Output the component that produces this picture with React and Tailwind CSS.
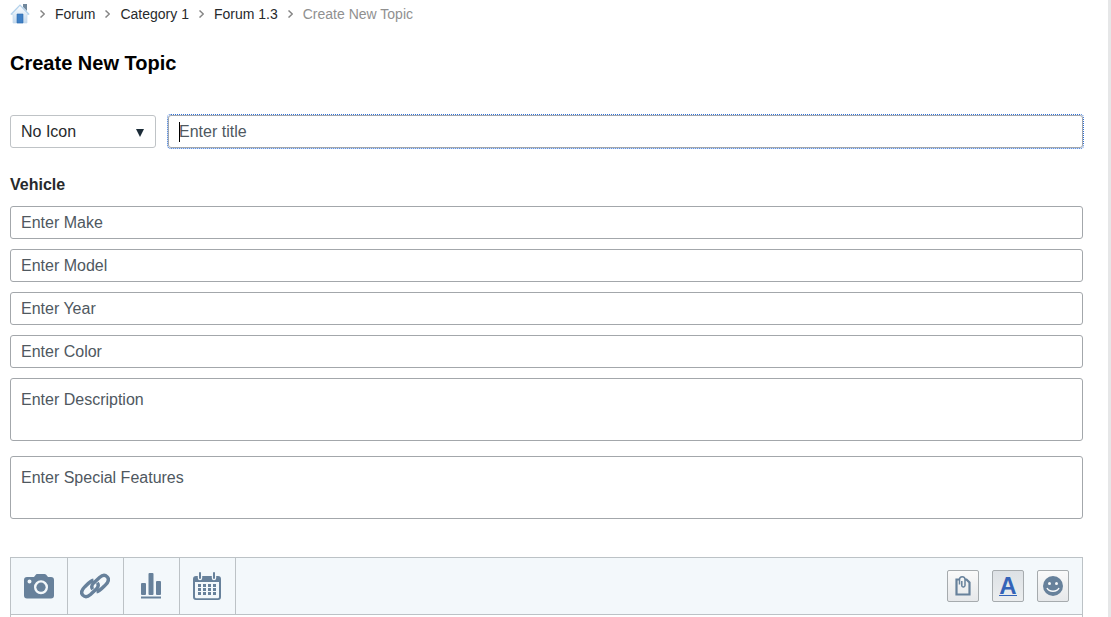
import React from "react";

const field =
  "block w-full rounded-[3px] border border-[#a3a7ab] bg-white px-[10px] text-base text-[#272a34] placeholder:text-[#4f585f] placeholder:opacity-100";

function HomeIcon() {
  return (
    <svg width="20" height="20" viewBox="0 0 20 20" aria-hidden="true">
      <defs>
        <linearGradient id="wall" x1="0" y1="0" x2="0" y2="1">
          <stop offset="0" stopColor="#ffffff" />
          <stop offset="1" stopColor="#c3d9ee" />
        </linearGradient>
      </defs>
      <path d="M13 0h4v7l-4-4z" fill="#71889d" />
      <path d="M10 1L18.500 10.500H17V19H3v-8.500H1.500z" fill="url(#wall)" stroke="#c6daec" strokeWidth=".7" />
      <path d="M.8 10.500L10 1l9.200 9.500" fill="none" stroke="#b4d2ec" strokeWidth="1.200" />
      <path d="M7 10h6v9H7z" fill="#3f80c6" stroke="#2e68ab" strokeWidth=".6" />
    </svg>
  );
}

function Chevron() {
  return (
    <svg width="5" height="8" viewBox="0 0 5 8" aria-hidden="true">
      <path d="M.5 .5l3.800 3.500L.5 7.500" fill="none" stroke="#858585" strokeWidth="1.500" />
    </svg>
  );
}

function CameraIcon() {
  return (
    <svg width="30" height="26" viewBox="0 0 30 26" aria-hidden="true">
      <path
        fillRule="evenodd"
        fill="#67819b"
        d="M3 4h7l2-2.400C12.400 1.100 13 1 13.500 1h7c.6 0 1.100.2 1.500.6L24 4h3a3 3 0 0 1 3 3V22.500a3 3 0 0 1-3 3H3a3 3 0 0 1-3-3V7a3 3 0 0 1 3-3zM17 7.200a7 7 0 1 0 0 14 7 7 0 0 0 0-14zM5.500 6.500a2 2 0 1 0 0 4 2 2 0 0 0 0-4z"
      />
      <circle cx="17" cy="14.200" r="4.600" fill="#67819b" />
    </svg>
  );
}

function LinkIcon() {
  const half =
    "M13.500 7.200c-3 .5-5.500 3.400-8.800 6.700-3.300 3.200-3.800 6.200-1.900 8.300 2.100 2.200 5.100 1.700 7.700-.6l5.800-5.500c2.200-2.200 2.400-4.500 1-6.300";
  return (
    <svg width="30" height="26" viewBox="0 0 30 26" aria-hidden="true">
      <g fill="none" stroke="#67819b" strokeWidth="3.400">
        <path d={half} />
        <path d={half} transform="rotate(180 15 13)" />
      </g>
    </svg>
  );
}

function ChartIcon() {
  return (
    <svg width="22" height="26" viewBox="0 0 22 26" aria-hidden="true" fill="#67819b">
      <rect x="1" y="10" width="5" height="12" rx="1" />
      <rect x="8.500" y="0" width="5" height="22" rx="1" />
      <rect x="16" y="8" width="5" height="14" rx="1" />
      <rect x="1" y="23.500" width="20" height="2" />
    </svg>
  );
}

function CalendarIcon() {
  return (
    <svg width="28" height="28" viewBox="0 0 28 28" aria-hidden="true">
      <path
        fillRule="evenodd"
        fill="#67819b"
        d="M3 4h22a3 3 0 0 1 3 3v18a3 3 0 0 1-3 3H3a3 3 0 0 1-3-3V7a3 3 0 0 1 3-3zM2 10v15a1.200 1.200 0 0 0 1.200 1.200h21.600A1.200 1.200 0 0 0 26 25V10z"
      />
      <path d="M7 1v5M21 1v5" stroke="#f3f8fb" strokeWidth="4.400" strokeLinecap="round" />
      <path d="M7 1v5M21 1v5" stroke="#67819b" strokeWidth="2" strokeLinecap="round" />
      <path d="M5 13.500h18M5 17.500h18M5 21.500h18" stroke="#67819b" strokeWidth="3" strokeDasharray="3 2" />
    </svg>
  );
}

function ClipIcon() {
  return (
    <svg width="16" height="20" viewBox="0 0 16 20" aria-hidden="true" fill="none" stroke="#67819b">
      <path d="M4.500 3.500H1.500V18.500h13V6.500l-3-3H10" strokeWidth="2.200" />
      <path d="M4.500 8.500V3.500a2.500 2.500 0 0 1 5.500 0v6a1.700 1.700 0 0 1-3.200.5V5" strokeWidth="1.500" />
    </svg>
  );
}

function SmileIcon() {
  return (
    <svg width="20" height="20" viewBox="0 0 20 20" aria-hidden="true">
      <circle cx="10" cy="10" r="10" fill="#67819b" />
      <circle cx="6.500" cy="7.500" r="1.500" fill="#f7f8f9" />
      <circle cx="13.500" cy="7.500" r="1.500" fill="#f7f8f9" />
      <path d="M4 12c2 4.300 10 4.300 12 0" fill="none" stroke="#f7f8f9" strokeWidth="1.500" />
    </svg>
  );
}

const tools = [
  { label: "Insert image", Icon: CameraIcon },
  { label: "Insert link", Icon: LinkIcon },
  { label: "Insert poll", Icon: ChartIcon },
  { label: "Insert event", Icon: CalendarIcon },
];

const small =
  "flex size-8 items-center justify-center rounded-[2px] border border-[#a6abae] bg-linear-to-b from-[#fafafa] to-[#e6e8ea]";

export default function App() {
  return (
    <div className="flex min-h-screen bg-[#e6e7e8] pr-[3px] font-['Liberation_Sans',Arial,sans-serif] text-[#272a2c]">
      <main className="flex min-w-0 flex-1 flex-col bg-white pr-[25px] pl-[10px]">
        <nav aria-label="Breadcrumb" className="pt-1">
          <ol className="flex h-5 items-center gap-[10px] text-sm">
            <li><a href="#home" aria-label="Home" className="block"><HomeIcon /></a></li>
            <li><Chevron /></li>
            <li><a href="#forum">Forum</a></li>
            <li><Chevron /></li>
            <li><a href="#category-1">Category 1</a></li>
            <li><Chevron /></li>
            <li><a href="#forum-1-3">Forum 1.3</a></li>
            <li><Chevron /></li>
            <li className="text-[#909090]" aria-current="page">Create New Topic</li>
          </ol>
        </nav>

        <h1 className="mt-[25px] text-xl leading-7 font-bold text-black">Create New Topic</h1>

        <form className="flex flex-1 flex-col pt-[38px]">
          <div className="flex gap-3">
            <div className="relative w-[146px] shrink-0">
              <select
                aria-label="Topic icon"
                className="block h-[33px] w-full appearance-none rounded-[3px] border border-[#bfc3c6] bg-white px-[10px] text-base"
              >
                <option>No Icon</option>
              </select>
              <svg
                className="pointer-events-none absolute top-[14px] right-[12px]"
                width="8"
                height="8"
                viewBox="0 0 8 8"
                aria-hidden="true"
              >
                <path d="M0 0h8L4 8z" fill="#1c2c38" />
              </svg>
            </div>
            <div className="relative min-w-0 flex-1">
              <input
                type="text"
                aria-label="Title"
                placeholder="Enter title"
                className={`${field} h-[33px] outline-1 outline-dotted outline-[#2f6fd6]`}
              />
              <span className="pointer-events-none absolute top-[7px] left-[11px] h-5 w-px bg-black" />
            </div>
          </div>

          <h2 className="mt-[25px] text-base leading-6 font-bold">Vehicle</h2>
          <div className="mt-[9px] flex flex-col gap-[10px]">
            {["Make", "Model", "Year", "Color"].map((name) => (
              <input
                key={name}
                type="text"
                aria-label={name}
                placeholder={`Enter ${name}`}
                className={`${field} h-[33px]`}
              />
            ))}
          </div>
          <div className="mt-[10px] flex flex-col gap-[15px]">
            {["Description", "Special Features"].map((name) => (
              <textarea
                key={name}
                aria-label={name}
                placeholder={`Enter ${name}`}
                className={`${field} h-[63px] resize-none py-[10px] leading-[22px]`}
              />
            ))}
          </div>

          <div className="mt-[38px] flex flex-1 flex-col border border-b-0 border-[#bcc2c6]">
            <div role="toolbar" aria-label="Editor" className="flex h-[57px] items-center justify-between border-b border-[#bcc2c6] bg-[#f3f8fb] pr-[13px] pl-px">
              <div className="flex h-full">
                {tools.map(({ label, Icon }) => (
                  <button
                    key={label}
                    type="button"
                    aria-label={label}
                    className="flex h-full w-14 items-center justify-center border-r border-[#bcc2c6] pr-0.5"
                  >
                    <Icon />
                  </button>
                ))}
              </div>
              <div className="flex gap-[13px]">
                <button type="button" aria-label="Paste" className={small}><ClipIcon /></button>
                <button
                  type="button"
                  aria-label="Text formatting"
                  aria-pressed="true"
                  className="flex size-8 items-center justify-center rounded-[2px] border border-[#a6abae] bg-linear-to-b from-[#dde1e5] to-[#eceeef] text-2xl font-bold text-[#3463b8]"
                >
                  <span className="border-b border-[#3463b8] leading-[19px]">A</span>
                </button>
                <button type="button" aria-label="Smileys" className={small}><SmileIcon /></button>
              </div>
            </div>
            <div className="min-h-[2px] flex-1 bg-white" />
          </div>
        </form>
      </main>
    </div>
  );
}
